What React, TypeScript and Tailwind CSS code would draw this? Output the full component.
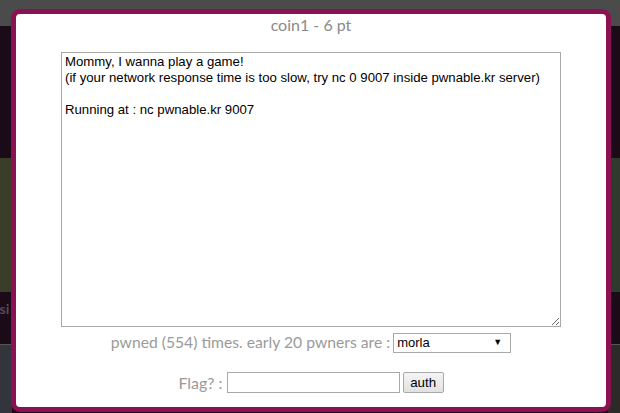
import React from "react";

export default function App() {
  return (
    <div className="relative w-[620px] h-[413px] overflow-hidden bg-[#1b0a17]">
      {/* background page (dimmed) */}
      <div className="h-[26px] bg-[#4b4b4b]" />
      <div className="flex justify-between mt-[132px]">
        <div className="w-[12px] h-[134px] bg-[#3a3d27]" />
        <div className="w-[12px] h-[134px] bg-[#2f3a2e]" />
      </div>
      <div className="flex justify-between">
        <div className="w-[12px] h-[52px] relative">
          <span className="absolute left-[-4px] top-[6px] text-[14px] font-bold text-[#5a4a56] [font-family:Lato,sans-serif]">isi</span>
        </div>
      </div>
      <div className="flex justify-between">
        <div className="w-[12px] h-[70px] bg-[#34343c] border-t border-[#555]" />
        <div className="w-[12px] h-[70px] bg-[#2b2a26] border-t border-[#555]" />
      </div>

      {/* modal */}
      <div className="absolute left-[11px] top-[9px] w-[600px] h-[403px] rounded-[9px] border-[5px] border-[#8c1152] bg-white flex flex-col items-center [font-family:Lato,sans-serif]">
        <div className="h-[22px] leading-[22px] text-[16px] text-[#8a8a8a]">coin1 - 6 pt</div>
        <textarea
          className="mt-[16px] w-[500px] h-[275px] border border-[#a9a9a9] pl-[3px] pr-[2px] py-[1px] text-[13.2px] leading-[16px] text-black resize-y outline-none [font-family:Arial,'Liberation_Sans',sans-serif]"
          defaultValue={"Mommy, I wanna play a game!\n(if your network response time is too slow, try nc 0 9007 inside pwnable.kr server)\n\nRunning at : nc pwnable.kr 9007"}
        />
        <div className="mt-[5px] flex items-center h-[21px]">
          <span className="text-[15.7px] text-[#9a9a9a]">pwned (554) times. early 20 pwners are :</span>
          <div className="ml-[3px] w-[118px] h-[20px] border border-[#a9a9a9] flex items-center justify-between pl-[3px] pr-[8px] text-[13px] text-black [font-family:Arial,'Liberation_Sans',sans-serif]">
            <span>morla</span>
            <span className="text-[9px]">▼</span>
          </div>
        </div>
        <div className="mt-[19px] flex items-center h-[21px]">
          <span className="text-[16px] text-[#9a9a9a]">Flag? :</span>
          <div className="ml-[4px] w-[173px] h-[21px] border border-[#a9a9a9] bg-white" />
          <div className="ml-[3px] w-[41px] h-[21px] border border-[#a9a9a9] rounded-[2px] bg-gradient-to-b from-[#f4f4f4] to-[#e2e2e2] flex items-center justify-center text-[13.33px] text-black [font-family:Arial,'Liberation_Sans',sans-serif]">
            auth
          </div>
        </div>
      </div>
    </div>
  );
}
